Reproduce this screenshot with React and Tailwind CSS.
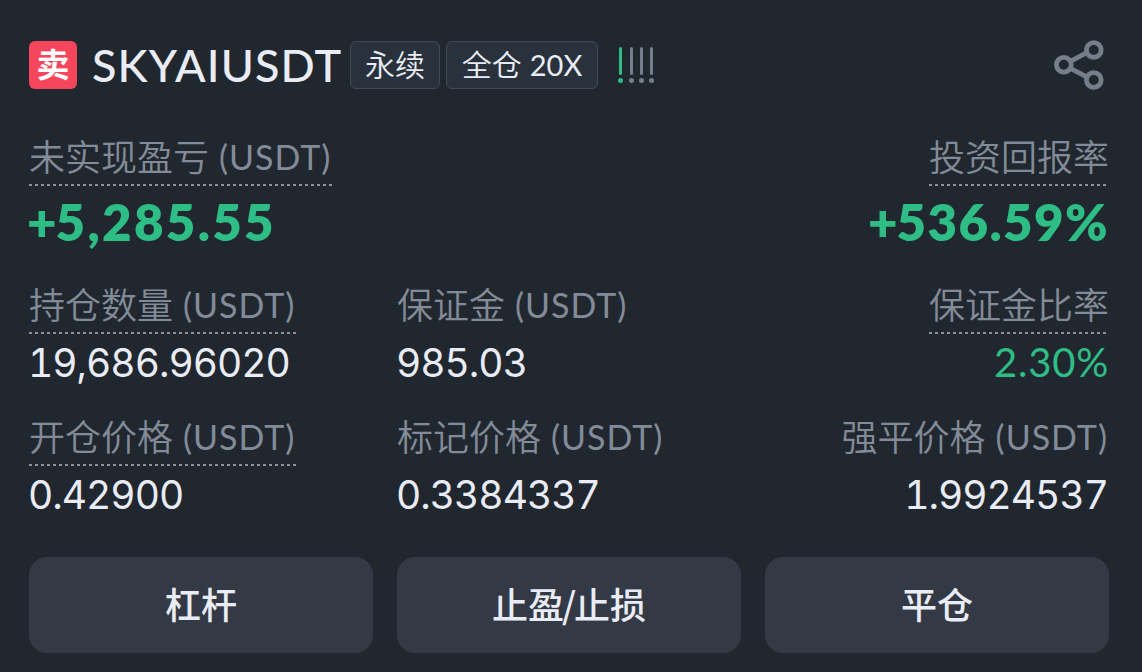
import { clsx } from 'clsx';

const stats = [
  { label: '持仓数量', unit: true, value: '19,686.96020', hint: true },
  { label: '保证金', unit: true, value: '985.03' },
  { label: '保证金比率', value: '2.30%', hint: true, positive: true },
  { label: '开仓价格', unit: true, value: '0.42900', hint: true },
  { label: '标记价格', unit: true, value: '0.3384337' },
  { label: '强平价格', unit: true, value: '1.9924537' },
];

const actions = [['杠杆'], ['止盈', '止损'], ['平仓']];

const ShareIcon = () => (
  <svg width="52" height="52" viewBox="0 0 52 52" fill="none" stroke="#767d8b" strokeWidth="4.8">
    <circle cx="10.8" cy="25.8" r="7.4" />
    <circle cx="40.8" cy="11" r="7.4" />
    <circle cx="40.8" cy="41" r="7.4" />
    <path d="M17.4 22.3 34.2 13.4M17.4 29.3 34.2 38.2" />
  </svg>
);

// Auto-deleverage indicator, first bar lit
const AdlIndicator = () => (
  <div className="flex gap-[6px]">
    {[true, false, false, false].map((on, i) => (
      <div key={i} className={clsx('flex w-1 flex-col items-center gap-[3px]', i === 1 && 'ml-px')}>
        <div className={clsx('h-[28px] w-[3px] rounded-full', on ? 'bg-[#2ebd85]' : 'bg-[#767d8b]')} />
        <div className={clsx('h-[5px] w-[5px] rounded-full', on ? 'bg-[#2ebd85]' : 'bg-[#767d8b]')} />
      </div>
    ))}
  </div>
);

const Label = ({ text, unit, hint }) => (
  <div className="flex h-[54px] w-fit flex-col justify-between text-[#848b98]">
    <div className="flex h-[50px] items-center whitespace-nowrap">
      <span className="pb-1 font-['Noto_Sans_CJK_SC',sans-serif] text-4xl font-[350]">{text}</span>
      {unit && (
        <span className="mr-px ml-[10px] pb-[2px] font-['Lato',sans-serif] text-[34px] tracking-[1px]">
          (USDT)
        </span>
      )}
    </div>
    {hint && (
      <div className="h-[2px] bg-[repeating-linear-gradient(90deg,#8b919d_0_3px,transparent_3px_6px)]" />
    )}
  </div>
);

const Stat = ({ label, unit, value, hint, positive, right }) => (
  <div className={clsx('flex flex-col', right && 'items-end')}>
    <Label text={label} unit={unit} hint={hint} />
    <div
      className={clsx(
        'flex h-14 items-center',
        positive
          ? "font-['Lato',sans-serif] text-[40px] tracking-[0.8px] text-[#2ebd85]"
          : "-ml-px pt-[2px] font-['Inter',sans-serif] text-[39px] tracking-[-1px] tabular-nums text-[#eaecf5]",
        right && !positive && 'pr-px'
      )}
    >
      {value}
    </div>
  </div>
);

// Headline figure for PnL and ROI
const Figure = ({ sign, className, children }) => (
  <div className="flex h-[72px] items-center font-['Lato',sans-serif] text-[51px] font-extrabold text-[#2ebd85]">
    <span className="-mr-[1px] -ml-[2px]">{sign}</span>
    <span className={className}>{children}</span>
  </div>
);

const Header = () => (
  <header className="flex h-12 items-center">
    <div className="flex size-12 items-center justify-center rounded-md bg-[#f6465d] pb-1 font-['Noto_Sans_CJK_SC',sans-serif] text-[33px] leading-none font-bold text-white">
      卖
    </div>
    <h1 className="ml-[15px] w-[258px] pt-[2px] font-['Lato',sans-serif] text-[45px] font-medium tracking-[1.1px] whitespace-nowrap text-[#eaecf5]">
      SKYAIUSDT
    </h1>
    <div className="flex h-12 w-[90px] items-center justify-center rounded-md border-[1.5px] border-[#434a56] bg-[#29313c] pb-[3px] font-['Noto_Sans_CJK_SC',sans-serif] text-[30px] font-[350] text-[#eaecf5]">
      永续
    </div>
    <div className="ml-[6px] flex h-12 w-[152px] items-center justify-center gap-2 rounded-md border-[1.5px] border-[#434a56] bg-[#29313c] text-[#eaecf5]">
      <span className="pb-[3px] font-['Noto_Sans_CJK_SC',sans-serif] text-[30px] font-[350]">全仓</span>
      <span className="font-['Lato',sans-serif] text-[29px]">20X</span>
    </div>
    <div className="ml-5">
      <AdlIndicator />
    </div>
    <div className="mr-1 ml-auto">
      <ShareIcon />
    </div>
  </header>
);

const App = () => {
  return (
    <div className="h-[672px] w-[1142px] overflow-hidden bg-[#20272f] pt-[41px] pr-[33px] pl-[29px]">
      <Header />

      <section className="mt-[43px] flex justify-between">
        <div>
          <Label text="未实现盈亏" unit hint />
          <Figure sign="+" className="tracking-[2.3px]">5,285.55</Figure>
        </div>
        <div className="flex flex-col items-end">
          <Label text="投资回报率" hint />
          <Figure sign="+" className="tracking-[1.4px]">536.59%</Figure>
        </div>
      </section>

      <section className="mt-[22px] grid grid-cols-3 gap-x-6 gap-y-[22px]">
        {stats.map((stat, i) => (
          <Stat key={stat.label} {...stat} right={i % 3 === 2} />
        ))}
      </section>

      <div className="mt-[35px] grid grid-cols-3 gap-6">
        {actions.map(([first, second]) => (
          <button
            key={first}
            className="h-24 rounded-[18px] bg-[#343a45] pb-1 font-['Noto_Sans_CJK_SC',sans-serif] text-4xl font-medium text-[#eaecf5]"
          >
            {first}
            {second && <span className="-mx-[2px]">/</span>}
            {second}
          </button>
        ))}
      </div>
    </div>
  );
};

export default App;
